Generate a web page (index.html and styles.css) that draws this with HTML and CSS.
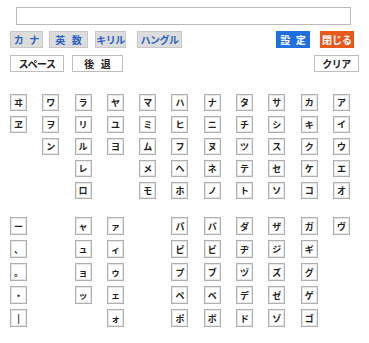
FILE: index.html
```html
<!DOCTYPE html>
<html lang="ja">
<head>
    <meta charset="UTF-8">
    <title>カナ入力</title>
    <link rel="stylesheet" href="styles.css">
</head>
<body>
    <div class="pad">
        <div class="field"><input class="input" type="text"></div>

        <div class="bar">
            <div class="group">
                <button class="mode kana">カ ナ</button>
                <button class="mode eisu">英 数</button>
                <button class="mode kiril">キリル</button>
                <button class="mode hangul">ハングル</button>
            </div>
            <div class="group wide">
                <button class="act ok">設 定</button>
                <button class="act close">閉じる</button>
            </div>
        </div>

        <div class="bar second">
            <div class="group edit">
                <button class="plain space">スペース</button>
                <button class="plain back">後 退</button>
            </div>
            <button class="plain clear">クリア</button>
        </div>

        <div class="keys" id="main"></div>
        <div class="keys lower" id="extra"></div>
    </div>

    <script src="script.js"></script>
</body>
</html>
```

FILE: styles.css
```css
*{
    box-sizing: border-box;
}

body{
    margin: 0;
    background-color: #fff;
    font-family: "Noto Sans CJK JP", "DejaVu Sans", sans-serif;
}

.pad{
    padding: 7px 12px 0 10px;
}

.field{
    padding-left: 6px;
}

.input{
    display: block;
    width: 335px;
    height: 18px;
    border: 1px solid #b9b9b9;
    margin: 0;
}

.bar{
    display: flex;
    justify-content: space-between;
    margin-top: 6px;
    height: 17px;
}

.second{
    margin-top: 7px;
}

.group{
    display: flex;
}

.wide{
    gap: 10px;
    margin-right: 3px;
}

.edit{
    gap: 8px;
}

button{
    font-family: "Noto Sans CJK JP", sans-serif;
    font-size: 10px;
    font-weight: bold;
    line-height: 1;
    padding: 0;
    height: 17px;
    border-radius: 0;
    cursor: pointer;
}

.mode{
    background-color: #dcdcdc;
    border: 1px solid #c8c8c8;
    color: #2a62c4;
}

.kana{
    width: 33px;
    word-spacing: 3px;
}

.eisu{
    width: 39px;
    margin-left: 6px;
    word-spacing: 4px;
}

.kiril{
    width: 31px;
    margin-left: 7px;
    letter-spacing: -0.5px;
}

.hangul{
    width: 45px;
    margin-left: 11px;
    letter-spacing: -0.5px;
}

.act{
    width: 34px;
    border: none;
    color: #fff;
}

.ok{
    background-color: #1f6fe0;
    word-spacing: 3px;
}

.close{
    background-color: #e6581c;
}

.plain{
    background-color: #fff;
    border: 1px solid #bdbdbd;
    color: #222;
}

.space{
    width: 54px;
    letter-spacing: -0.5px;
}

.back{
    width: 51px;
    word-spacing: 4px;
}

.clear{
    width: 45px;
    margin-right: -2px;
    letter-spacing: -0.5px;
}

.keys{
    display: grid;
    grid-template-columns: repeat(11, 32.3px);
    grid-auto-rows: 17px;
    row-gap: 5px;
    margin-top: 22px;
}

.lower{
    grid-auto-rows: 18px;
    margin-top: 18px;
}

.key{
    width: 17px;
    height: 100%;
    border: 1px solid #b0b0b0;
    box-shadow: inset 0 0 0 1px #e6e6e6;
    background-color: #fff;
    font-size: 9px;
    font-weight: bold;
    color: #222;
    display: flex;
    align-items: center;
    justify-content: center;
}
```

FILE: script.js
```js
// 列ごとの文字 (左から右)
var mainCols = [
    "ヰヱ", "ワヲン", "ラリルレロ", "ヤユヨ", "マミムメモ", "ハヒフヘホ",
    "ナニヌネノ", "タチツテト", "サシスセソ", "カキクケコ", "アイウエオ"
];
var extraCols = [
    "ー、。・|", "", "ャュョッ", "ァィゥェォ", "", "パピプペポ",
    "バビブベボ", "ダヂヅデド", "ザジズゼゾ", "ガギグゲゴ", "ヴ"
];

function build(id, cols) {
    var box = document.getElementById(id);
    cols.forEach(function(chars, c) {
        Array.from(chars).forEach(function(ch, r) {
            var k = document.createElement("button");
            k.className = "key";
            k.textContent = ch;
            k.style.gridColumn = c + 1;
            k.style.gridRow = r + 1;
            box.appendChild(k);
        });
    });
    // 空の列でも5行ぶんの高さを保つ
    var filler = document.createElement("span");
    filler.style.gridRow = "5";
    filler.style.gridColumn = "1";
    box.appendChild(filler);
}

build("main", mainCols);
build("extra", extraCols);
```
